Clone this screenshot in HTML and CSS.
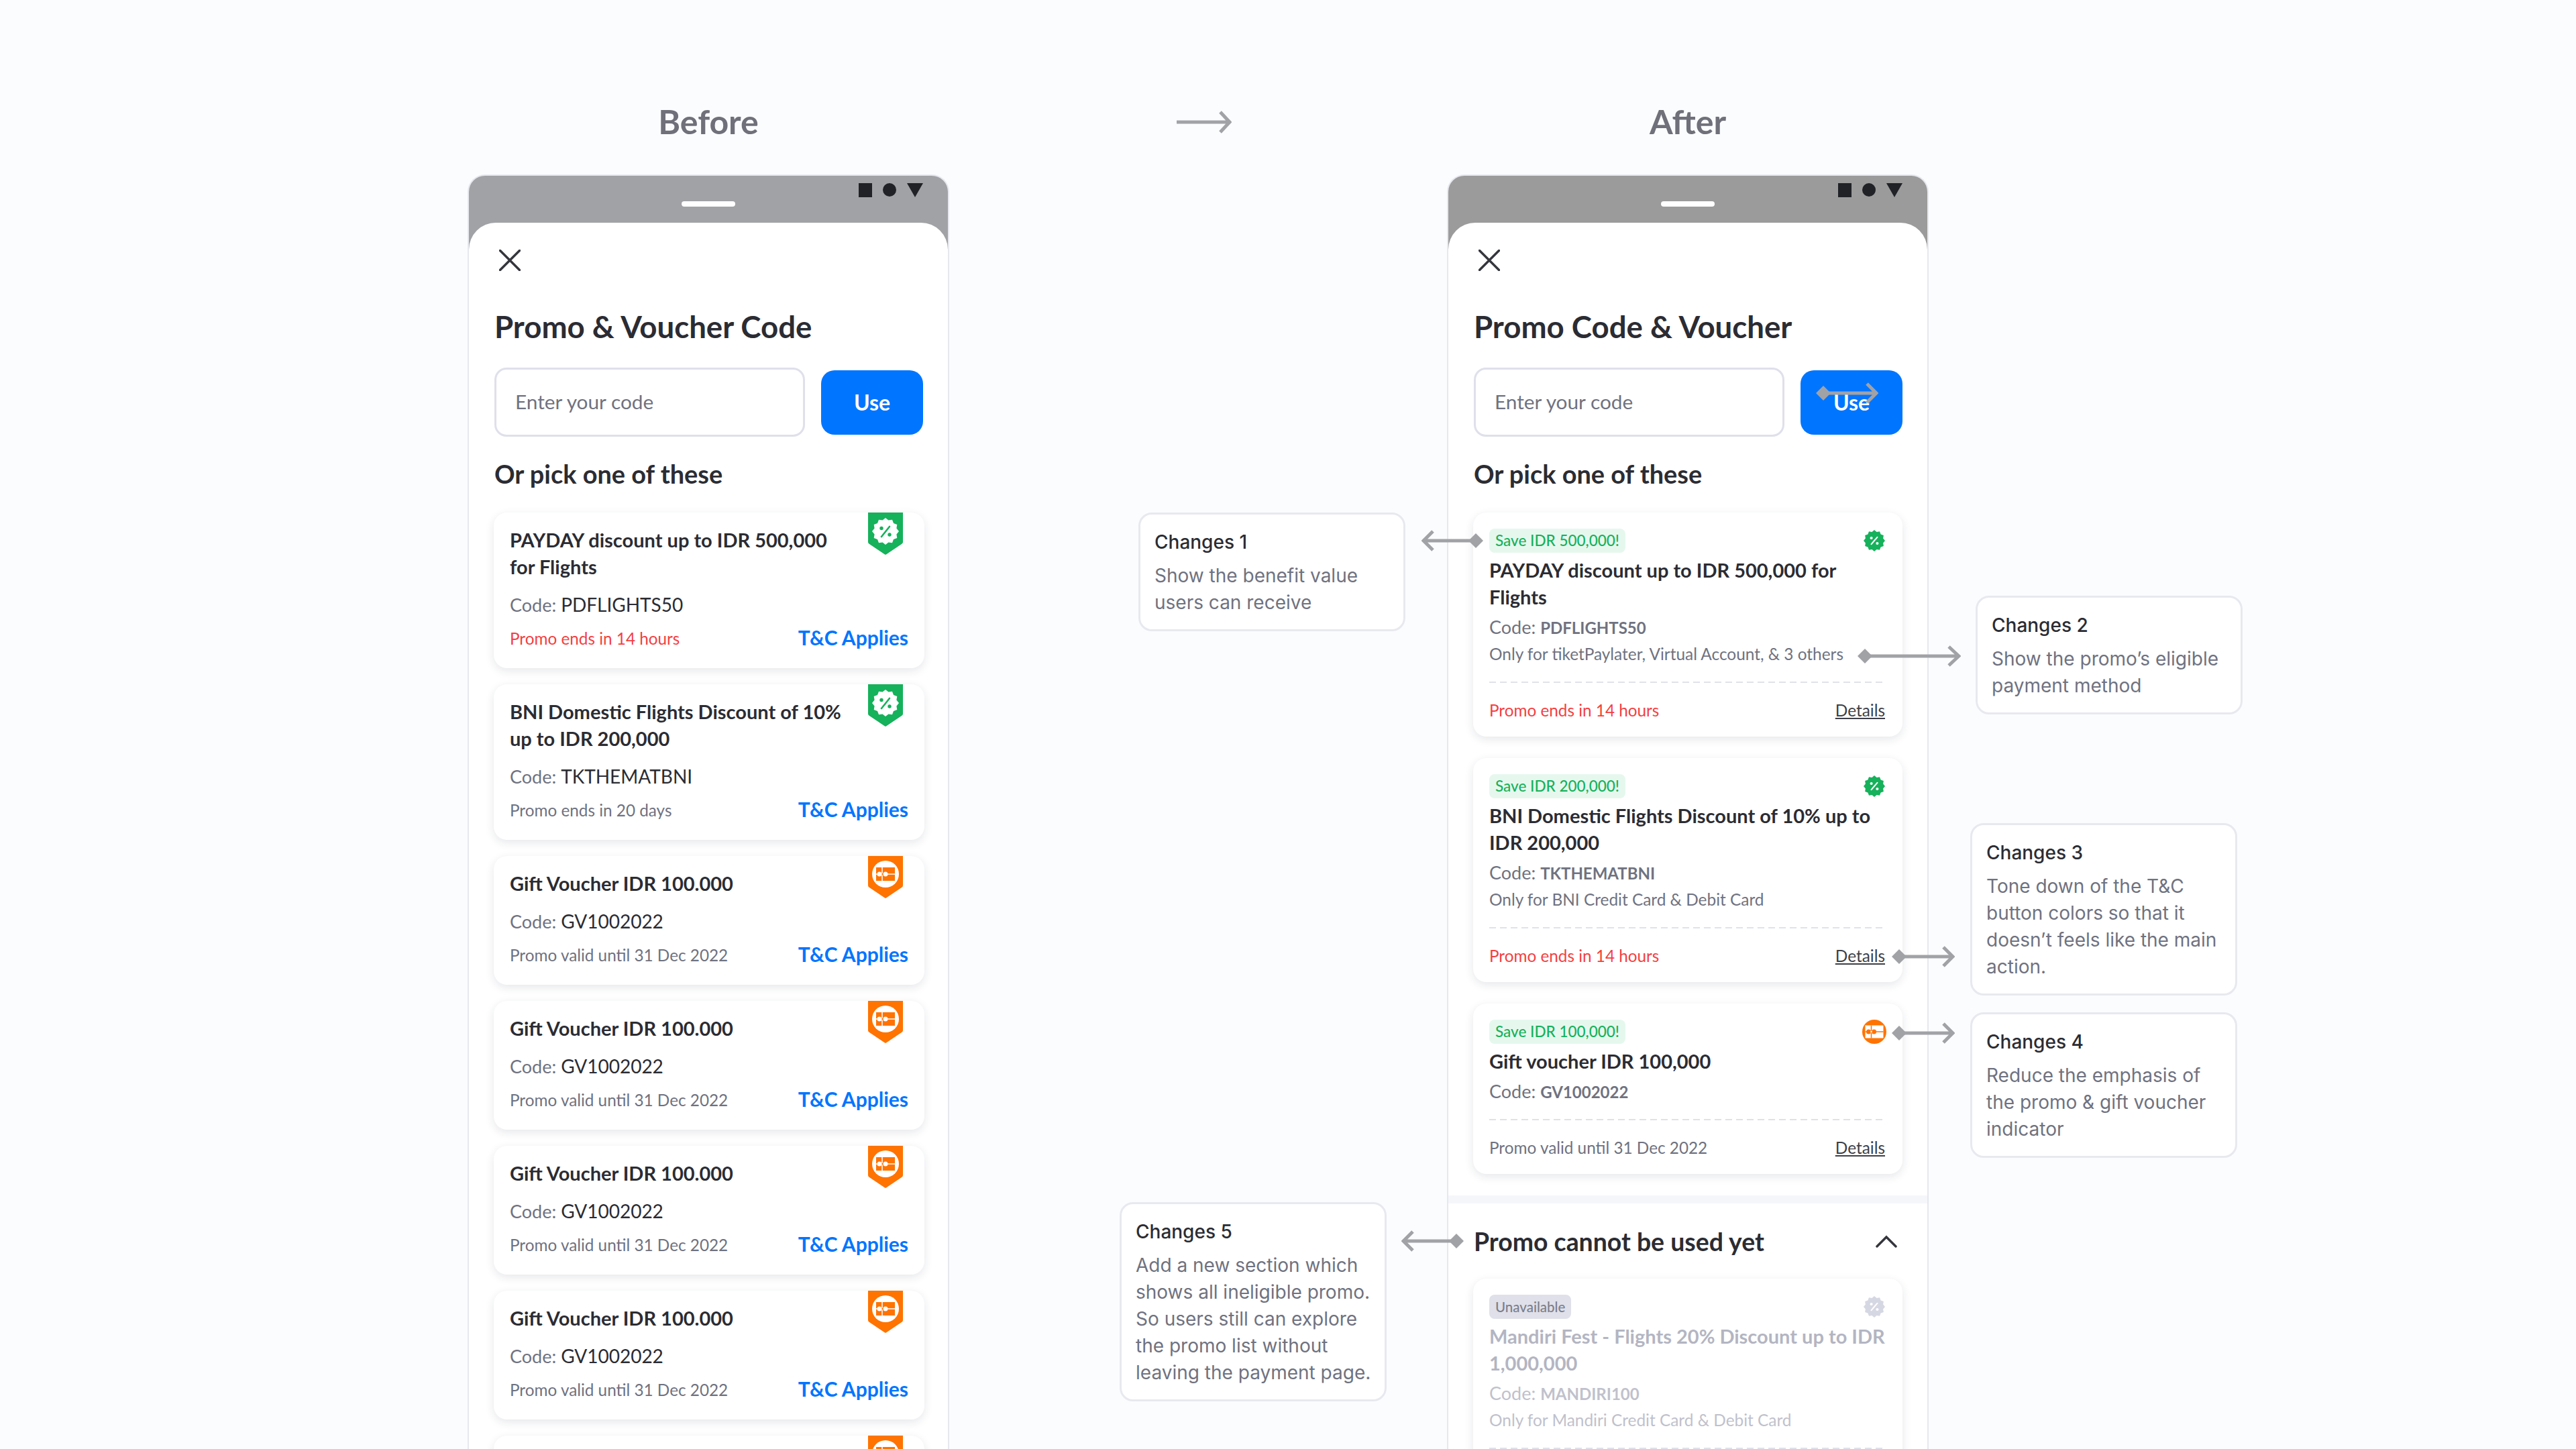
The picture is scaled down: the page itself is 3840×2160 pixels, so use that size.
FILE: index.html
```html
<!DOCTYPE html>
<html lang="en">
<head>
    <meta charset="UTF-8">
    <title>Promo page redesign</title>
    <link rel="stylesheet" href="styles.css">
</head>
<body>
    <svg class="sprites" width="0" height="0">
        <symbol id="shield" viewBox="0 0 52 63">
            <path d="M0 0H52V44Q52 46 50 47L27 62.500Q26 63 25 62.500L2 47Q0 46 0 44Z" fill="currentColor"/>
        </symbol>
        <symbol id="burst" viewBox="-20 -20 40 40">
            <polygon fill="currentColor" points="20,0 16.400,4.400 17.300,10 12,12 10,17.300 4.400,16.400 0,20 -4.400,16.400 -10,17.300 -12,12 -17.300,10 -16.400,4.400 -20,0 -16.400,-4.400 -17.300,-10 -12,-12 -10,-17.300 -4.400,-16.400 0,-20 4.400,-16.400 10,-17.300 12,-12 17.300,-10 16.400,-4.400"/>
        </symbol>
        <symbol id="arrow-right" viewBox="0 0 82 34">
            <path d="M0 17H79M65 2L79 17L65 32" fill="none" stroke="#a1a2a6" stroke-width="5"/>
        </symbol>
    </svg>

    <main class="compare">
        <section class="col">
            <h2 class="col-title">Before</h2>
            <div class="phone phone-before">
                <div class="statusbar">
                    <span class="nav-pill"></span>
                    <div class="nav-icons">
                        <span class="nav-square"></span>
                        <span class="nav-circle"></span>
                        <span class="nav-triangle"></span>
                    </div>
                </div>
                <div class="sheet">
                    <svg class="close" viewBox="0 0 32 32"><path d="M1.500 1.500L30.500 30.500M30.500 1.500L1.500 30.500"/></svg>
                    <h1 class="sheet-title">Promo &amp; Voucher Code</h1>
                    <div class="code-form">
                        <div class="code-input">Enter your code</div>
                        <button class="code-btn">Use</button>
                    </div>
                    <h3 class="pick-title">Or pick one of these</h3>
                    <div class="old-list">
                        <article class="old-card">
                            <svg class="ribbon ribbon-green" viewBox="0 0 52 63">
                                <use href="#shield" width="52" height="63"/>
                                <use class="burst-white" href="#burst" x="6" y="8" width="40" height="40"/>
                                <g class="pct-green"><circle cx="20" cy="23.500" r="2.700"/><circle cx="32" cy="33" r="2.700"/><path d="M32 21L20 36"/></g>
                            </svg>
                            <h4 class="old-title">PAYDAY discount up to IDR 500,000<br>for Flights</h4>
                            <p class="old-code">Code: <span>PDFLIGHTS50</span></p>
                            <div class="old-foot"><span class="expire-soon">Promo ends in 14 hours</span><a class="tnc">T&amp;C Applies</a></div>
                        </article>
                        <article class="old-card">
                            <svg class="ribbon ribbon-green" viewBox="0 0 52 63">
                                <use href="#shield" width="52" height="63"/>
                                <use class="burst-white" href="#burst" x="6" y="8" width="40" height="40"/>
                                <g class="pct-green"><circle cx="20" cy="23.500" r="2.700"/><circle cx="32" cy="33" r="2.700"/><path d="M32 21L20 36"/></g>
                            </svg>
                            <h4 class="old-title">BNI Domestic Flights Discount of 10%<br>up to IDR 200,000</h4>
                            <p class="old-code">Code: <span>TKTHEMATBNI</span></p>
                            <div class="old-foot"><span>Promo ends in 20 days</span><a class="tnc">T&amp;C Applies</a></div>
                        </article>
                        <article class="old-card">
                            <svg class="ribbon ribbon-orange" viewBox="0 0 52 63">
                                <use href="#shield" width="52" height="63"/>
                                <circle class="gift-disc" cx="26" cy="27" r="20"/>
                                <rect class="gift-box" x="12" y="17" width="28" height="20"/>
                                <path class="gift-line" d="M12 27H40M21 17V37"/>
                                <circle class="gift-disc" cx="17" cy="27" r="3.500"/><circle class="gift-disc" cx="26" cy="27" r="3.500"/>
                                <circle class="gift-box" cx="21.500" cy="27" r="1.200"/>
                            </svg>
                            <h4 class="old-title">Gift Voucher IDR 100.000</h4>
                            <p class="old-code">Code: <span>GV1002022</span></p>
                            <div class="old-foot"><span>Promo valid until 31 Dec 2022</span><a class="tnc">T&amp;C Applies</a></div>
                        </article>
                        <article class="old-card">
                            <svg class="ribbon ribbon-orange" viewBox="0 0 52 63">
                                <use href="#shield" width="52" height="63"/>
                                <circle class="gift-disc" cx="26" cy="27" r="20"/>
                                <rect class="gift-box" x="12" y="17" width="28" height="20"/>
                                <path class="gift-line" d="M12 27H40M21 17V37"/>
                                <circle class="gift-disc" cx="17" cy="27" r="3.500"/><circle class="gift-disc" cx="26" cy="27" r="3.500"/>
                                <circle class="gift-box" cx="21.500" cy="27" r="1.200"/>
                            </svg>
                            <h4 class="old-title">Gift Voucher IDR 100.000</h4>
                            <p class="old-code">Code: <span>GV1002022</span></p>
                            <div class="old-foot"><span>Promo valid until 31 Dec 2022</span><a class="tnc">T&amp;C Applies</a></div>
                        </article>
                        <article class="old-card">
                            <svg class="ribbon ribbon-orange" viewBox="0 0 52 63">
                                <use href="#shield" width="52" height="63"/>
                                <circle class="gift-disc" cx="26" cy="27" r="20"/>
                                <rect class="gift-box" x="12" y="17" width="28" height="20"/>
                                <path class="gift-line" d="M12 27H40M21 17V37"/>
                                <circle class="gift-disc" cx="17" cy="27" r="3.500"/><circle class="gift-disc" cx="26" cy="27" r="3.500"/>
                                <circle class="gift-box" cx="21.500" cy="27" r="1.200"/>
                            </svg>
                            <h4 class="old-title">Gift Voucher IDR 100.000</h4>
                            <p class="old-code">Code: <span>GV1002022</span></p>
                            <div class="old-foot"><span>Promo valid until 31 Dec 2022</span><a class="tnc">T&amp;C Applies</a></div>
                        </article>
                        <article class="old-card">
                            <svg class="ribbon ribbon-orange" viewBox="0 0 52 63">
                                <use href="#shield" width="52" height="63"/>
                                <circle class="gift-disc" cx="26" cy="27" r="20"/>
                                <rect class="gift-box" x="12" y="17" width="28" height="20"/>
                                <path class="gift-line" d="M12 27H40M21 17V37"/>
                                <circle class="gift-disc" cx="17" cy="27" r="3.500"/><circle class="gift-disc" cx="26" cy="27" r="3.500"/>
                                <circle class="gift-box" cx="21.500" cy="27" r="1.200"/>
                            </svg>
                            <h4 class="old-title">Gift Voucher IDR 100.000</h4>
                            <p class="old-code">Code: <span>GV1002022</span></p>
                            <div class="old-foot"><span>Promo valid until 31 Dec 2022</span><a class="tnc">T&amp;C Applies</a></div>
                        </article>
                        <article class="old-card">
                            <svg class="ribbon ribbon-orange" viewBox="0 0 52 63">
                                <use href="#shield" width="52" height="63"/>
                                <circle class="gift-disc" cx="26" cy="27" r="20"/>
                                <rect class="gift-box" x="12" y="17" width="28" height="20"/>
                                <path class="gift-line" d="M12 27H40M21 17V37"/>
                                <circle class="gift-disc" cx="17" cy="27" r="3.500"/><circle class="gift-disc" cx="26" cy="27" r="3.500"/>
                                <circle class="gift-box" cx="21.500" cy="27" r="1.200"/>
                            </svg>
                        </article>
                    </div>
                </div>
            </div>
        </section>

        <section class="col">
            <h2 class="col-title">After</h2>
            <div class="phone phone-after">
                <div class="statusbar">
                    <span class="nav-pill"></span>
                    <div class="nav-icons">
                        <span class="nav-square"></span>
                        <span class="nav-circle"></span>
                        <span class="nav-triangle"></span>
                    </div>
                </div>
                <div class="sheet">
                    <svg class="close" viewBox="0 0 32 32"><path d="M1.500 1.500L30.500 30.500M30.500 1.500L1.500 30.500"/></svg>
                    <h1 class="sheet-title">Promo Code &amp; Voucher</h1>
                    <div class="code-form">
                        <div class="code-input">Enter your code</div>
                        <button class="code-btn">Use</button>
                    </div>
                    <h3 class="pick-title">Or pick one of these</h3>
                    <div class="new-list">
                        <article class="new-card">
                            <div class="new-top">
                                <span class="save-tag">Save IDR 500,000!</span>
                                <svg class="mini-burst mini-green" viewBox="-20 -20 40 40"><use href="#burst" x="-20" y="-20" width="40" height="40"/><g class="pct-white"><circle cx="-5.500" cy="-5" r="2.600"/><circle cx="5.500" cy="5" r="2.600"/><path d="M5.500 -6.500L-5.500 6.500"/></g></svg>
                            </div>
                            <h4 class="new-title">PAYDAY discount up to IDR 500,000 for<br>Flights</h4>
                            <p class="new-code">Code: <b>PDFLIGHTS50</b></p>
                            <p class="new-only">Only for tiketPaylater, Virtual Account, &amp; 3 others</p>
                            <div class="dash"></div>
                            <div class="new-foot"><span class="expire-soon">Promo ends in 14 hours</span><a class="details">Details</a></div>
                        </article>
                        <article class="new-card">
                            <div class="new-top">
                                <span class="save-tag">Save IDR 200,000!</span>
                                <svg class="mini-burst mini-green" viewBox="-20 -20 40 40"><use href="#burst" x="-20" y="-20" width="40" height="40"/><g class="pct-white"><circle cx="-5.500" cy="-5" r="2.600"/><circle cx="5.500" cy="5" r="2.600"/><path d="M5.500 -6.500L-5.500 6.500"/></g></svg>
                            </div>
                            <h4 class="new-title">BNI Domestic Flights Discount of 10% up to<br>IDR 200,000</h4>
                            <p class="new-code">Code: <b>TKTHEMATBNI</b></p>
                            <p class="new-only">Only for BNI Credit Card &amp; Debit Card</p>
                            <div class="dash"></div>
                            <div class="new-foot"><span class="expire-soon">Promo ends in 14 hours</span><a class="details">Details</a></div>
                        </article>
                        <article class="new-card">
                            <div class="new-top">
                                <span class="save-tag">Save IDR 100,000!</span>
                                <svg class="mini-gift" viewBox="0 0 36 36">
                                    <circle class="gift-bg" cx="18" cy="18" r="18"/>
                                    <rect class="gift-card" x="4.500" y="8.500" width="27" height="19"/>
                                    <path class="gift-cut" d="M4.500 18H31.500M13.500 8.500V27.500"/>
                                    <circle class="gift-bg" cx="9.500" cy="18" r="3.500"/><circle class="gift-bg" cx="17.500" cy="18" r="3.500"/>
                                    <circle class="gift-card" cx="13.500" cy="18" r="1.300"/>
                                </svg>
                            </div>
                            <h4 class="new-title">Gift voucher IDR 100,000</h4>
                            <p class="new-code">Code: <b>GV1002022</b></p>
                            <div class="dash"></div>
                            <div class="new-foot"><span>Promo valid until 31 Dec 2022</span><a class="details">Details</a></div>
                        </article>
                    </div>
                    <div class="section-gap"></div>
                    <div class="locked-head">
                        <h3 class="locked-title">Promo cannot be used yet</h3>
                        <svg class="chevron" viewBox="0 0 32 19"><path d="M2 17L16 3L30 17"/></svg>
                    </div>
                    <article class="new-card new-card-off">
                        <div class="new-top">
                            <span class="save-tag save-tag-off">Unavailable</span>
                            <svg class="mini-burst mini-grey" viewBox="-20 -20 40 40"><use href="#burst" x="-20" y="-20" width="40" height="40"/><g class="pct-white"><circle cx="-5.500" cy="-5" r="2.600"/><circle cx="5.500" cy="5" r="2.600"/><path d="M5.500 -6.500L-5.500 6.500"/></g></svg>
                        </div>
                        <h4 class="new-title">Mandiri Fest - Flights 20% Discount up to IDR<br>1,000,000</h4>
                        <p class="new-code">Code: <b>MANDIRI100</b></p>
                        <p class="new-only">Only for Mandiri Credit Card &amp; Debit Card</p>
                        <div class="dash"></div>
                    </article>
                </div>
            </div>
        </section>
    </main>

    <!-- annotations sit on the free canvas around the phones -->
    <svg class="link link-main"><use href="#arrow-right" width="82" height="34"/></svg>

    <aside class="note note-1">
        <h5>Changes 1</h5>
        <p>Show the benefit value users can receive</p>
    </aside>
    <aside class="note note-2">
        <h5>Changes 2</h5>
        <p>Show the promo’s eligible payment method</p>
    </aside>
    <aside class="note note-3">
        <h5>Changes 3</h5>
        <p>Tone down of the T&amp;C button colors so that it doesn’t feels like the main action.</p>
    </aside>
    <aside class="note note-4">
        <h5>Changes 4</h5>
        <p>Reduce the emphasis of the promo &amp; gift voucher indicator</p>
    </aside>
    <aside class="note note-5">
        <h5>Changes 5</h5>
        <p>Add a new section which shows all ineligible promo. So users still can explore the promo list without leaving the payment page.</p>
    </aside>

    <svg class="pointer pointer-1" viewBox="0 0 92 34"><path class="pointer-line" d="M3 17H82M17 3L3 17L17 31"/><path class="pointer-dot" d="M81 6L92 17L81 28L70 17Z"/></svg>
    <svg class="pointer pointer-2" viewBox="0 0 154 34"><path class="pointer-line" d="M11 17H151M136 3L151 17L136 31"/><path class="pointer-dot" d="M11 6L22 17L11 28L0 17Z"/></svg>
    <svg class="pointer pointer-use" viewBox="0 0 93 34"><path class="pointer-line" d="M11 17H90M76 3L90 17L76 31"/><path class="pointer-dot" d="M11 6L22 17L11 28L0 17Z"/></svg>
    <svg class="pointer pointer-3" viewBox="0 0 94 34"><path class="pointer-line" d="M11 17H91M77 3L91 17L77 31"/><path class="pointer-dot" d="M11 6L22 17L11 28L0 17Z"/></svg>
    <svg class="pointer pointer-4" viewBox="0 0 94 34"><path class="pointer-line" d="M11 17H91M77 3L91 17L77 31"/><path class="pointer-dot" d="M11 6L22 17L11 28L0 17Z"/></svg>
    <svg class="pointer pointer-5" viewBox="0 0 93 34"><path class="pointer-line" d="M3 17H82M17 3L3 17L17 31"/><path class="pointer-dot" d="M82 6L93 17L82 28L71 17Z"/></svg>
</body>
</html>
```

FILE: styles.css
```css
html, body {
    margin: 0;
    padding: 0;
    height: 2160px;
    overflow: hidden;
}
body {
    position: relative;
    background: #fbfcfe;
    font-family: "Lato", "Liberation Sans", sans-serif;
    color: #2b2c33;
}
h1, h2, h3, h4, h5, p {
    margin: 0;
}
.sprites {
    position: absolute;
}

.compare {
    display: flex;
    gap: 742px;
    padding-left: 697px;
}
.col {
    width: 718px;
}
.col-title {
    padding-top: 147px;
    height: 68px;
    margin-bottom: 45px;
    line-height: 68px;
    text-align: center;
    font-size: 50px;
    font-weight: 700;
    color: #6f7079;
}

/* phone frame */
.phone {
    box-sizing: border-box;
    width: 718px;
    height: 1900px;
    border: 2px solid #e7e8ef;
    border-bottom: none;
    border-radius: 26px 26px 0 0;
    overflow: hidden;
    background: #9b9b9b;
}
.phone-before {
    background: #a1a2a5;
}
.statusbar {
    position: relative;
    height: 70px;
}
.nav-pill {
    position: absolute;
    left: 317px;
    top: 38px;
    width: 80px;
    height: 8px;
    border-radius: 4px;
    background: #fff;
}
.nav-icons {
    position: absolute;
    top: 11px;
    right: 37px;
    display: flex;
    gap: 16px;
}
.nav-square {
    width: 20px;
    height: 21px;
    background: #212227;
}
.nav-circle {
    width: 20px;
    height: 20px;
    border-radius: 50%;
    background: #212227;
}
.nav-triangle {
    width: 24px;
    height: 21px;
    background: #212227;
    clip-path: polygon(0 0, 100% 0, 50% 100%);
}

.sheet {
    height: 1900px;
    background: #fff;
    border-radius: 40px 40px 0 0;
    padding: 40px 37px 0 38px;
}
.close {
    display: block;
    width: 32px;
    height: 32px;
    margin-left: 7px;
    fill: none;
    stroke: #35363d;
    stroke-width: 3.500;
    stroke-linecap: round;
}
.sheet-title {
    margin-top: 58px;
    height: 50px;
    line-height: 50px;
    font-size: 45.600px;
    font-weight: 700;
}
.code-form {
    display: flex;
    align-items: center;
    justify-content: space-between;
    margin-top: 36px;
}
.code-input {
    box-sizing: border-box;
    width: 463px;
    height: 103px;
    padding-left: 28px;
    border: 3px solid #dfe0ea;
    border-radius: 18px;
    line-height: 95px;
    font-size: 29.800px;
    color: #6f7280;
}
.code-btn {
    width: 152px;
    height: 96px;
    border: none;
    border-radius: 20px;
    background: #0075ff;
    color: #fff;
    font-family: inherit;
    font-size: 32px;
    font-weight: 700;
}
.pick-title {
    margin-top: 33px;
    height: 48px;
    line-height: 46px;
    font-size: 37.900px;
    font-weight: 700;
}

/* before cards */
.old-list {
    display: flex;
    flex-direction: column;
    gap: 24px;
    margin: 32px -2px 0 -1px;
}
.old-card {
    position: relative;
    box-sizing: border-box;
    padding: 21px 24px 25px;
    min-height: 192px;
    border-radius: 20px;
    background: #fff;
    box-shadow: 0 4px 14px rgba(30, 35, 60, 0.11);
}
.ribbon {
    position: absolute;
    top: 0;
    right: 32px;
    width: 52px;
    height: 63px;
}
.ribbon-green {
    color: #16b15b;
}
.ribbon-orange {
    color: #ff7300;
}
.burst-white {
    color: #fff;
}
.pct-green {
    fill: #16b15b;
    stroke: #16b15b;
    stroke-width: 0;
}
.pct-green path {
    stroke-width: 2.600;
    stroke-linecap: round;
}
.gift-disc {
    fill: #fff;
}
.gift-box {
    fill: #ff7300;
}
.gift-line {
    fill: none;
    stroke: #fff;
    stroke-width: 1.500;
}
.old-title {
    font-size: 29px;
    line-height: 40px;
    font-weight: 700;
    white-space: nowrap;
}
.old-code {
    margin-top: 16px;
    height: 40px;
    line-height: 40px;
    font-size: 27px;
    color: #6f7280;
}
.old-code span {
    font-size: 28px;
    color: #2b2c33;
}
.old-foot {
    display: flex;
    justify-content: space-between;
    align-items: center;
    height: 40px;
    margin-top: 10px;
    font-size: 24.300px;
    color: #6f7280;
}
.expire-soon {
    color: #f4403f;
}
.tnc {
    font-size: 30px;
    font-weight: 700;
    color: #0075ff;
    transform: translateY(-1px);
}

/* after cards */
.new-list {
    display: flex;
    flex-direction: column;
    gap: 32px;
    margin: 32px 0 0 -1px;
}
.new-card {
    box-sizing: border-box;
    padding: 24px 26px 20px 24px;
    border-radius: 20px;
    background: #fff;
    box-shadow: 0 4px 14px rgba(30, 35, 60, 0.11);
}
.new-top {
    display: flex;
    justify-content: space-between;
    align-items: center;
    height: 36px;
}
.save-tag {
    padding: 0 9px;
    height: 36px;
    line-height: 36px;
    border-radius: 8px;
    background: #e6f8ee;
    color: #16b15b;
    font-size: 22.500px;
    font-weight: 500;
}
.save-tag-off {
    background: #dfe0e9;
    color: #7b7e8c;
    font-size: 20.500px;
}
.mini-burst {
    width: 32px;
    height: 32px;
}
.mini-green {
    color: #16b15b;
}
.mini-grey {
    color: #d5d7e2;
}
.pct-white {
    fill: #fff;
}
.pct-white path {
    stroke: #fff;
    stroke-width: 2.600;
    stroke-linecap: round;
}
.mini-gift {
    width: 36px;
    height: 36px;
    margin-right: -2px;
}
.gift-bg {
    fill: #ff7300;
}
.gift-card {
    fill: #fff;
}
.gift-cut {
    fill: none;
    stroke: #ff7300;
    stroke-width: 1.500;
}
.new-title {
    margin-top: 6px;
    font-size: 29px;
    line-height: 40px;
    font-weight: 700;
    white-space: nowrap;
}
.new-code {
    margin-top: 5px;
    height: 40px;
    line-height: 40px;
    font-size: 27px;
    color: #6f7280;
}
.new-code b {
    font-size: 24px;
    font-weight: 700;
}
.new-only {
    height: 40px;
    line-height: 40px;
    font-size: 24.400px;
    color: #6f7280;
}
.dash {
    height: 2px;
    margin-top: 21px;
    background: repeating-linear-gradient(90deg, #e0e1ea 0 10px, transparent 10px 16px);
}
.new-foot {
    display: flex;
    justify-content: space-between;
    align-items: center;
    height: 40px;
    margin-top: 20px;
    font-size: 24.300px;
    color: #6f7280;
}
.details {
    color: #3e3f47;
    text-decoration: underline;
    font-size: 24.400px;
}
.section-gap {
    height: 12px;
    margin: 32px -37px 0 -38px;
    background: #f5f6fa;
}
.locked-head {
    display: flex;
    justify-content: space-between;
    align-items: center;
    height: 48px;
    margin-top: 32px;
    padding-right: 8px;
}
.locked-title {
    font-size: 37.400px;
    font-weight: 700;
}
.chevron {
    width: 32px;
    height: 19px;
    fill: none;
    stroke: #35363d;
    stroke-width: 3.500;
    stroke-linecap: round;
}
.new-card-off {
    margin: 32px 0 0 -1px;
    color: #b3b5c2;
}
.new-card-off .new-code,
.new-card-off .new-only {
    color: #bfc1cc;
}

/* notes */
.note {
    position: absolute;
    box-sizing: border-box;
    width: 398px;
    padding: 21px 16px 20px 21px;
    border: 3px solid #e8e9ef;
    border-radius: 20px;
    background: #fff;
    font-family: "Inter", "Liberation Sans", sans-serif;
    font-size: 28px;
    line-height: 40px;
}
.note h5 {
    font-size: 28px;
    font-weight: 500;
    color: #2b2c33;
}
.note p {
    margin-top: 10px;
    color: #6f7280;
}
.note-1 { left: 1697px; top: 764px; }
.note-2 { left: 2945px; top: 888px; }
.note-3 { left: 2937px; top: 1227px; }
.note-4 { left: 2937px; top: 1509px; }
.note-5 { left: 1669px; top: 1792px; }

/* connectors */
.link,
.pointer {
    position: absolute;
    height: 34px;
}
.link-main {
    left: 1754px;
    top: 165px;
    width: 82px;
}
.pointer-line {
    fill: none;
    stroke: #a1a2a6;
    stroke-width: 5;
}
.pointer-dot {
    fill: #a1a2a6;
}
.pointer-1 { left: 2119px; top: 789px; width: 92px; }
.pointer-2 { left: 2769px; top: 961px; width: 154px; }
.pointer-use { left: 2707px; top: 569px; width: 93px; }
.pointer-3 { left: 2820px; top: 1409px; width: 94px; }
.pointer-4 { left: 2820px; top: 1523px; width: 94px; }
.pointer-5 { left: 2089px; top: 1833px; width: 93px; }
```
